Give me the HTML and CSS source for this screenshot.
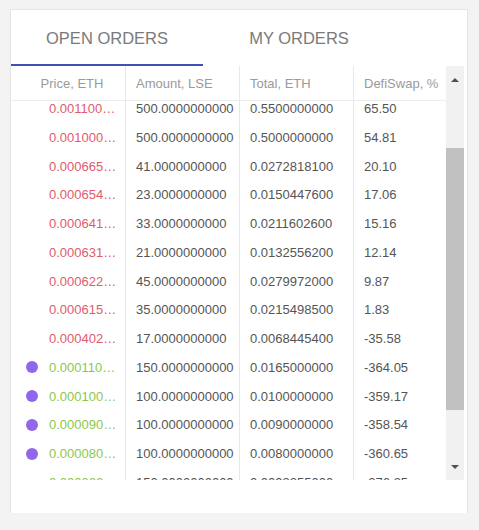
FILE: index.html
```html
<!DOCTYPE html>
<html lang="en">
<head>
    <meta charset="UTF-8">
    <title>Orders</title>
    <link rel="stylesheet" href="styles.css">
</head>
<body>
    <div class="card">
        <div class="tabs">
            <div class="tab active">OPEN ORDERS</div>
            <div class="tab">MY ORDERS</div>
        </div>

        <div class="orders">
            <div class="table">
                <div class="row head">
                    <div class="cell price">Price, ETH</div>
                    <div class="cell">Amount, LSE</div>
                    <div class="cell">Total, ETH</div>
                    <div class="cell">DefiSwap, %</div>
                </div>
                <div class="body">
                    <div class="rows">
                        <div class="row sell">
                            <div class="cell price"><span class="mark"></span><span class="num">0.0011000000</span></div>
                            <div class="cell">500.0000000000</div>
                            <div class="cell">0.5500000000</div>
                            <div class="cell">65.50</div>
                        </div>
                        <div class="row sell">
                            <div class="cell price"><span class="mark"></span><span class="num">0.0010000000</span></div>
                            <div class="cell">500.0000000000</div>
                            <div class="cell">0.5000000000</div>
                            <div class="cell">54.81</div>
                        </div>
                        <div class="row sell">
                            <div class="cell price"><span class="mark"></span><span class="num">0.0006654100</span></div>
                            <div class="cell">41.0000000000</div>
                            <div class="cell">0.0272818100</div>
                            <div class="cell">20.10</div>
                        </div>
                        <div class="row sell">
                            <div class="cell price"><span class="mark"></span><span class="num">0.0006541200</span></div>
                            <div class="cell">23.0000000000</div>
                            <div class="cell">0.0150447600</div>
                            <div class="cell">17.06</div>
                        </div>
                        <div class="row sell">
                            <div class="cell price"><span class="mark"></span><span class="num">0.0006412200</span></div>
                            <div class="cell">33.0000000000</div>
                            <div class="cell">0.0211602600</div>
                            <div class="cell">15.16</div>
                        </div>
                        <div class="row sell">
                            <div class="cell price"><span class="mark"></span><span class="num">0.0006312200</span></div>
                            <div class="cell">21.0000000000</div>
                            <div class="cell">0.0132556200</div>
                            <div class="cell">12.14</div>
                        </div>
                        <div class="row sell">
                            <div class="cell price"><span class="mark"></span><span class="num">0.0006221600</span></div>
                            <div class="cell">45.0000000000</div>
                            <div class="cell">0.0279972000</div>
                            <div class="cell">9.87</div>
                        </div>
                        <div class="row sell">
                            <div class="cell price"><span class="mark"></span><span class="num">0.0006157100</span></div>
                            <div class="cell">35.0000000000</div>
                            <div class="cell">0.0215498500</div>
                            <div class="cell">1.83</div>
                        </div>
                        <div class="row sell">
                            <div class="cell price"><span class="mark"></span><span class="num">0.0004026200</span></div>
                            <div class="cell">17.0000000000</div>
                            <div class="cell">0.0068445400</div>
                            <div class="cell">-35.58</div>
                        </div>
                        <div class="row buy mine">
                            <div class="cell price"><span class="mark"></span><span class="num">0.0001100000</span></div>
                            <div class="cell">150.0000000000</div>
                            <div class="cell">0.0165000000</div>
                            <div class="cell">-364.05</div>
                        </div>
                        <div class="row buy mine">
                            <div class="cell price"><span class="mark"></span><span class="num">0.0001000000</span></div>
                            <div class="cell">100.0000000000</div>
                            <div class="cell">0.0100000000</div>
                            <div class="cell">-359.17</div>
                        </div>
                        <div class="row buy mine">
                            <div class="cell price"><span class="mark"></span><span class="num">0.0000900000</span></div>
                            <div class="cell">100.0000000000</div>
                            <div class="cell">0.0090000000</div>
                            <div class="cell">-358.54</div>
                        </div>
                        <div class="row buy mine">
                            <div class="cell price"><span class="mark"></span><span class="num">0.0000800000</span></div>
                            <div class="cell">100.0000000000</div>
                            <div class="cell">0.0080000000</div>
                            <div class="cell">-360.65</div>
                        </div>
                        <div class="row buy">
                            <div class="cell price"><span class="mark"></span><span class="num">0.0000621700</span></div>
                            <div class="cell">150.0000000000</div>
                            <div class="cell">0.0093255000</div>
                            <div class="cell">-376.35</div>
                        </div>
                    </div>
                </div>
            </div>

            <div class="scrollbar">
                <div class="arrow-btn"><span class="arrow up"></span></div>
                <div class="thumb"></div>
                <div class="arrow-btn down-btn"><span class="arrow down"></span></div>
            </div>
        </div>
    </div>
</body>
</html>
```

FILE: styles.css
```css
/* General Styling */
* {
    margin: 0;
    padding: 0;
    box-sizing: border-box;
}

body {
    background-color: #f3f3f3;
    padding: 10px 0 0 11px;
    font-family: "Liberation Sans", Arial, sans-serif;
    color: #555;
}

/* Card */
.card {
    width: 456px;
    height: 503px;
    background: #ffffff;
    box-shadow: 0 0 0 1px #e6e6e6, 0 1px 3px rgba(0, 0, 0, 0.06);
}

/* Tabs */
.tabs {
    display: flex;
    height: 56px;
}

.tab {
    width: 192px;
    display: flex;
    align-items: center;
    justify-content: center;
    font-size: 16.5px;
    color: #7a7a7a;
}

.tab.active {
    box-shadow: inset 0 -2px 0 #3f51b5;
}

/* Orders table */
.orders {
    display: flex;
    height: 414px;
    margin-right: 3px;
}

.table {
    flex: 1;
    display: flex;
    flex-direction: column;
    min-width: 0;
}

.row {
    display: grid;
    grid-template-columns: 115px 114px 114px 1fr;
    height: 28.75px;
    font-size: 13px;
}

.row.head {
    height: 35px;
    color: #9a9a9a;
    border-bottom: 1px solid #ececec;
}

.cell {
    display: flex;
    align-items: center;
    padding-left: 10px;
    border-right: 1px solid #e8e8e8;
    white-space: nowrap;
    overflow: hidden;
}

.cell:last-child {
    border-right: none;
}

.head .price {
    justify-content: center;
    padding: 0 1px 0 0;
}

.body {
    flex: 1;
    overflow: hidden;
}

/* list is scrolled a little, first row sits partly under the header */
.rows {
    margin-top: -6.7px;
}

/* Price column */
.cell.price {
    padding: 0 7px 0 15px;
}

.mark {
    flex: none;
    width: 12px;
    height: 12px;
    border-radius: 50%;
    margin-right: 11px;
}

.num {
    flex: 1;
    min-width: 0;
    overflow: hidden;
    text-overflow: ellipsis;
}

.sell .num {
    color: #e25a6b;
}

.buy .num {
    color: #8cc84b;
}

.mine .mark {
    background-color: #9266ec;
}

/* Scrollbar */
.scrollbar {
    width: 18px;
    background-color: #f1f1f1;
    display: flex;
    flex-direction: column;
}

.arrow-btn {
    height: 28px;
    display: flex;
    align-items: center;
    justify-content: center;
}

.down-btn {
    height: 26px;
    margin-top: auto;
}

.arrow {
    width: 0;
    height: 0;
    border-left: 4px solid transparent;
    border-right: 4px solid transparent;
}

.arrow.up {
    border-bottom: 4px solid #505050;
}

.arrow.down {
    border-top: 4px solid #505050;
}

.thumb {
    margin-top: 54px;
    height: 262px;
    background-color: #c1c1c1;
}
```
